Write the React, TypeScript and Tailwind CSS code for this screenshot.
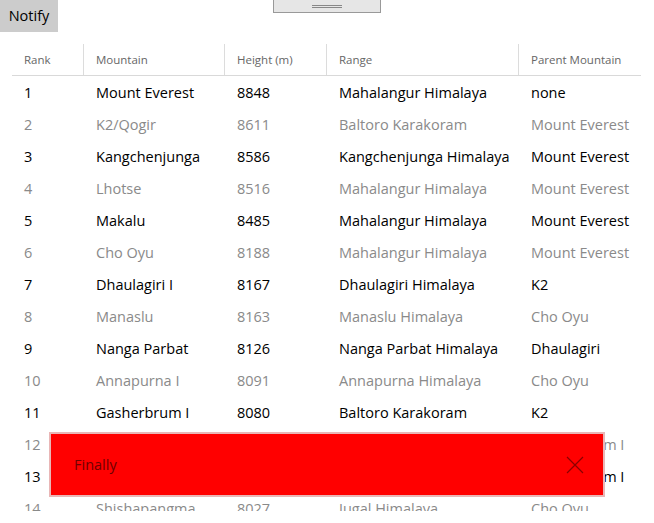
import React from "react";

const rows = [
  ["1", "Mount Everest", "8848", "Mahalangur Himalaya", "none"],
  ["2", "K2/Qogir", "8611", "Baltoro Karakoram", "Mount Everest"],
  ["3", "Kangchenjunga", "8586", "Kangchenjunga Himalaya", "Mount Everest"],
  ["4", "Lhotse", "8516", "Mahalangur Himalaya", "Mount Everest"],
  ["5", "Makalu", "8485", "Mahalangur Himalaya", "Mount Everest"],
  ["6", "Cho Oyu", "8188", "Mahalangur Himalaya", "Mount Everest"],
  ["7", "Dhaulagiri I", "8167", "Dhaulagiri Himalaya", "K2"],
  ["8", "Manaslu", "8163", "Manaslu Himalaya", "Cho Oyu"],
  ["9", "Nanga Parbat", "8126", "Nanga Parbat Himalaya", "Dhaulagiri"],
  ["10", "Annapurna I", "8091", "Annapurna Himalaya", "Cho Oyu"],
  ["11", "Gasherbrum I", "8080", "Baltoro Karakoram", "K2"],
  ["12", "Broad Peak", "8051", "Baltoro Karakoram", "Gasherbrum I"],
  ["13", "Gasherbrum II", "8035", "Baltoro Karakoram", "Gasherbrum I"],
  ["14", "Shishapangma", "8027", "Jugal Himalaya", "Cho Oyu"],
];

const headers = ["Rank", "Mountain", "Height (m)", "Range", "Parent Mountain"];
const cols = "grid grid-cols-[71px_141px_102px_192px_123px]";

export default function App() {
  return (
    <div
      className="relative w-[654px] h-[523px] overflow-hidden bg-white"
      style={{ fontFamily: '"Open Sans", "Noto Sans", sans-serif' }}
    >
      {/* top bar */}
      <div className="h-8">
        <button className="h-8 w-[58px] bg-[#cccccc] text-[14.5px] text-black">
          Notify
        </button>
      </div>

      {/* splitter grip */}
      <div className="absolute left-[273px] top-0 w-[108px] h-[13px] bg-[#e6e6e6] border border-[#999] border-t-0 flex flex-col items-center justify-center gap-[1px]">
        <div className="w-[30px] h-px bg-[#888]" />
        <div className="w-[30px] h-px bg-[#888]" />
      </div>

      {/* grid */}
      <div className="mt-3 ml-3 h-[467px] overflow-hidden">
        <div className={`${cols} h-8 border-b border-[#d9d9d9] w-[629px]`}>
          {headers.map((h, i) => (
            <div
              key={h}
              className={`flex items-center px-3 pt-px text-[11.5px] text-[#666] ${
                i > 0 ? "border-l border-[#dcdcdc]" : ""
              }`}
            >
              {h}
            </div>
          ))}
        </div>
        {rows.map((r, ri) => (
          <div
            key={r[0]}
            className={`${cols} h-8 text-[14.5px] ${
              ri % 2 === 0 ? "text-black" : "text-[#8a8a8a]"
            }`}
          >
            {r.map((c, ci) => (
              <div
                key={ci}
                className={`flex items-center pt-[2px] whitespace-nowrap ${
                  ci === 0 ? "pl-3" : "pl-[13px]"
                }`}
              >
                {c}
              </div>
            ))}
          </div>
        ))}
      </div>

      {/* toast */}
      <div className="absolute left-[49px] top-[432px] w-[556px] h-[65px] bg-[#ff0000] border-2 border-[#e9b6b6] flex items-center justify-between pl-[23px] pr-[16px]">
        <span className="text-[14.5px] pt-px text-[#6e0000]">Finally</span>
        <svg width="20" height="20" viewBox="0 0 20 20" className="mr-[2px]">
          <path d="M2 2 L18 18 M18 2 L2 18" stroke="#8a0000" strokeWidth="1.2" />
        </svg>
      </div>
    </div>
  );
}
